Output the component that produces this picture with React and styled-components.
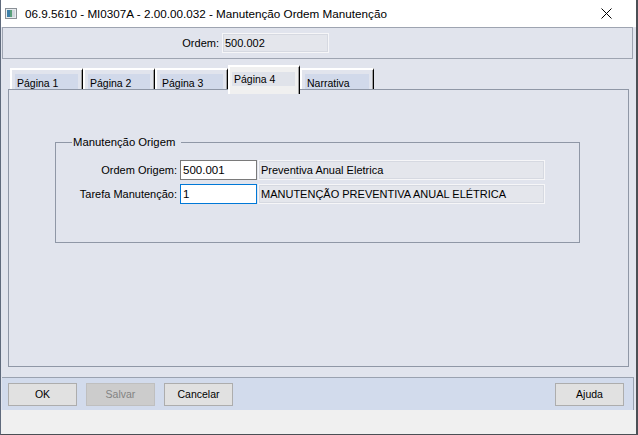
import React from 'react';
import styled, { createGlobalStyle } from 'styled-components';

const Global = createGlobalStyle`
  html, body {
    margin: 0;
    padding: 0;
    background: #ffffff;
    font-family: "Liberation Sans", Arial, sans-serif;
    font-size: 11px;
    color: #000;
  }
`;

const Window = styled.div`
  width: 638px;
  height: 435px;
  box-sizing: border-box;
  display: flex;
  flex-direction: column;
  border-left: 1px solid #5f6a7c;
  border-right: 2px solid #4b4f55;
  border-bottom: 1px solid #4b4f55;
  background: #e1e4ed;
`;

const TitleBar = styled.div`
  height: 27px;
  flex: none;
  background: #ffffff;
  display: flex;
  align-items: center;
  padding: 0 0 0 4px;
`;

const Title = styled.span`
  flex: 1;
  margin-left: 8px;
  font-size: 11.7px;
  color: #000;
`;

const CloseBtn = styled.div`
  width: 46px;
  height: 27px;
  display: flex;
  align-items: center;
  justify-content: center;
  margin-right: 7px;
`;

const Body = styled.div`
  flex: 1;
  display: flex;
  flex-direction: column;
  padding: 0 2px 0 1px;
`;

const HeaderPanel = styled.div`
  height: 30px;
  flex: none;
  border: 1px solid #9ea4b1;
  display: flex;
  align-items: center;
  gap: 3px;
  margin-right: 1px;
`;

const Label = styled.span`
  white-space: nowrap;
  text-align: right;
  width: ${p => p.$w}px;
  flex: none;
`;

const ReadField = styled.div`
  width: ${p => p.$w}px;
  height: 20px;
  box-sizing: border-box;
  background: #e4e6ec;
  border: 1px solid #f6f6f8;
  outline: 1px solid #d6d9e1;
  outline-offset: -2px;
  display: flex;
  align-items: center;
  padding-left: 2px;
  flex: none;
`;

const TabStrip = styled.div`
  display: flex;
  align-items: flex-end;
  height: 29px;
  flex: none;
  padding-left: 8px;
  margin-top: 1px;
`;

const Tab = styled.div`
  box-sizing: border-box;
  width: ${p => p.$w}px;
  height: ${p => (p.$active ? 29 : 21)}px;
  margin-bottom: ${p => (p.$active ? -5 : 0)}px;
  background: ${p => (p.$active ? '#f0f0f0' : '#e1e4ed')};
  border-top: 2px solid #ffffff;
  border-left: 2px solid #ffffff;
  border-right: 1px solid #000000;
  box-shadow: inset -1px 0 0 #a0a0a0;
  padding: ${p => (p.$active ? '5px 4px 0 2px' : '4px 4px 0 3px')};
  position: relative;
  z-index: ${p => (p.$active ? 2 : 1)};
`;

const TabLabel = styled.div`
  height: ${p => (p.$active ? 14 : 15)}px;
  background: ${p => (p.$active ? '#e0e3ea' : '#d1d9ea')};
  display: flex;
  align-items: ${p => (p.$active ? 'center' : 'flex-end')};
  padding-left: 2px;
  font-size: 10.5px;
`;

const TabPanel = styled.div`
  height: 278px;
  flex: none;
  margin: 0 5px 0 6px;
  border: 1px solid #8f97a6;
  box-sizing: border-box;
  padding: 46px 48px 0 46px;
  position: relative;
  z-index: 1;
`;

const GroupBox = styled.fieldset`
  margin: 0;
  height: 107px;
  box-sizing: border-box;
  border: 1px solid #8f97a6;
  padding: 12px 0 0 0;
  display: flex;
  flex-direction: column;
  gap: 4px;
`;

const Legend = styled.legend`
  padding: 0 6px 0 1px;
  margin-left: 16px;
  font-size: 11.3px;
`;

const Row = styled.div`
  display: flex;
  align-items: center;
  gap: 3px;
`;

const Input = styled.div`
  width: 77px;
  height: 20px;
  box-sizing: border-box;
  background: #ffffff;
  border: 1px solid ${p => (p.$focus ? '#0078d7' : '#7a7a7a')};
  display: flex;
  align-items: center;
  padding-left: 2px;
  margin-right: -2px;
  font-size: 11.5px;
`;

const Footer = styled.div`
  margin-top: 10px;
  height: 33px;
  flex: none;
  box-sizing: border-box;
  background: #d2dbec;
  border-top: 1px solid #9aa2b0;
  border-right: 1px solid #9aa2b0;
  display: flex;
  align-items: center;
  padding: 0 9px 0 6px;
  gap: 9px;
`;

const Button = styled.div`
  width: 69px;
  height: 23px;
  box-sizing: border-box;
  background: ${p => (p.$disabled ? '#cccccc' : '#e1e1e1')};
  border: 1px solid ${p => (p.$disabled ? '#bfbfbf' : '#adadad')};
  color: ${p => (p.$disabled ? '#838383' : '#000')};
  display: flex;
  align-items: center;
  justify-content: center;
  font-size: 10.5px;
  margin-left: ${p => (p.$push ? 'auto' : '0')};
`;

const StatusArea = styled.div`
  flex: 1;
  background: #f0f0f0;
  margin: 0 -2px 0 -1px;
`;

const tabs = [
  { name: 'Página 1', w: 73 },
  { name: 'Página 2', w: 72 },
  { name: 'Página 3', w: 73 },
  { name: 'Página 4', w: 72, active: true },
  { name: 'Narrativa', w: 74 },
];

function AppIcon() {
  return (
    <svg width="12" height="11" viewBox="0 0 12 11">
      <rect x="0.5" y="0.5" width="11" height="10" fill="#e8ecef" stroke="#8a9096" />
      <rect x="2" y="2" width="3" height="7" fill="#3c7fa8" />
      <rect x="5" y="2" width="2" height="7" fill="#5aa07a" />
      <rect x="7" y="2" width="3" height="7" fill="#cfd6dc" />
    </svg>
  );
}

export default function App() {
  return (
    <>
      <Global />
      <Window>
        <TitleBar>
          <AppIcon />
          <Title>06.9.5610 - MI0307A - 2.00.00.032 - Manutenção Ordem Manutenção</Title>
          <CloseBtn>
            <svg width="11" height="11" viewBox="0 0 11 11">
              <path d="M0.5 0.5 L10.5 10.5 M10.5 0.5 L0.5 10.5" stroke="#000" strokeWidth="1" />
            </svg>
          </CloseBtn>
        </TitleBar>
        <Body>
          <HeaderPanel>
            <Label $w={216}>Ordem:</Label>
            <ReadField $w={107}>500.002</ReadField>
          </HeaderPanel>
          <TabStrip>
            {tabs.map(t => (
              <Tab key={t.name} $w={t.w} $active={t.active}>
                <TabLabel $active={t.active}>{t.name}</TabLabel>
              </Tab>
            ))}
          </TabStrip>
          <TabPanel>
            <GroupBox>
              <Legend>Manutenção Origem</Legend>
              <Row>
                <Label $w={121}>Ordem Origem:</Label>
                <Input>500.001</Input>
                <ReadField $w={287}>Preventiva Anual Eletrica</ReadField>
              </Row>
              <Row>
                <Label $w={121}>Tarefa Manutenção:</Label>
                <Input $focus>1</Input>
                <ReadField $w={287}>MANUTENÇÃO PREVENTIVA ANUAL ELÉTRICA</ReadField>
              </Row>
            </GroupBox>
          </TabPanel>
          <Footer>
            <Button>OK</Button>
            <Button $disabled>Salvar</Button>
            <Button>Cancelar</Button>
            <Button $push>Ajuda</Button>
          </Footer>
          <StatusArea />
        </Body>
      </Window>
    </>
  );
}
